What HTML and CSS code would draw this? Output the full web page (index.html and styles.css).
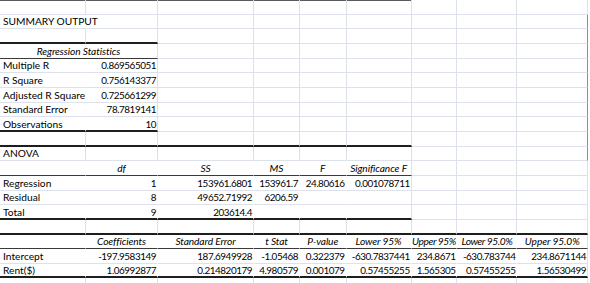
FILE: index.html
```html
<!DOCTYPE html>
<html>
<head>
<meta charset="utf-8">
<link rel="stylesheet" href="styles.css">
</head>
<body>
<div class="sheet">
  <!-- row 0 -->
  <div class="c top"></div><div class="c top"></div><div class="c top"></div><div class="c top"></div><div class="c top"></div><div class="c top"></div><div class="c"></div><div class="c"></div><div class="c"></div>
  <!-- row 1 -->
  <div class="c nr ov">SUMMARY OUTPUT</div><div class="c"></div><div class="c"></div><div class="c"></div><div class="c"></div><div class="c"></div><div class="c"></div><div class="c"></div><div class="c dk"></div>
  <!-- row 2 -->
  <div class="c th"></div><div class="c th"></div><div class="c"></div><div class="c"></div><div class="c"></div><div class="c"></div><div class="c"></div><div class="c"></div><div class="c dk"></div>
  <!-- row 3 -->
  <div class="c s2 ctr i thin">Regression Statistics</div><div class="c"></div><div class="c"></div><div class="c"></div><div class="c"></div><div class="c"></div><div class="c"></div><div class="c dk"></div>
  <!-- row 4 -->
  <div class="c nr">Multiple R</div><div class="c r">0.869565051</div><div class="c"></div><div class="c"></div><div class="c"></div><div class="c"></div><div class="c"></div><div class="c"></div><div class="c dk"></div>
  <!-- row 5 -->
  <div class="c nr">R Square</div><div class="c r">0.756143377</div><div class="c"></div><div class="c"></div><div class="c"></div><div class="c"></div><div class="c"></div><div class="c"></div><div class="c dk"></div>
  <!-- row 6 -->
  <div class="c nr">Adjusted R Square</div><div class="c r">0.725661299</div><div class="c"></div><div class="c"></div><div class="c"></div><div class="c"></div><div class="c"></div><div class="c"></div><div class="c dk"></div>
  <!-- row 7 -->
  <div class="c nr">Standard Error</div><div class="c r">78.7819141</div><div class="c"></div><div class="c"></div><div class="c"></div><div class="c"></div><div class="c"></div><div class="c"></div><div class="c dk"></div>
  <!-- row 8 -->
  <div class="c nr th">Observations</div><div class="c r th">10</div><div class="c"></div><div class="c"></div><div class="c"></div><div class="c"></div><div class="c"></div><div class="c"></div><div class="c dk"></div>
  <!-- row 9 -->
  <div class="c th"></div><div class="c th"></div><div class="c th"></div><div class="c th"></div><div class="c th"></div><div class="c th"></div><div class="c"></div><div class="c"></div><div class="c dk"></div>
  <!-- row 10 -->
  <div class="c">ANOVA</div><div class="c"></div><div class="c"></div><div class="c"></div><div class="c"></div><div class="c"></div><div class="c"></div><div class="c"></div><div class="c dk"></div>
  <!-- row 11 -->
  <div class="c nr thin"></div><div class="c nr thin ctr i">df</div><div class="c nr thin ctr i">SS</div><div class="c nr thin ctr i">MS</div><div class="c nr thin ctr i">F</div><div class="c thin ctr i">Significance F</div><div class="c"></div><div class="c"></div><div class="c"></div>
  <!-- row 12 -->
  <div class="c nr">Regression</div><div class="c nr r">1</div><div class="c nr r">153961.6801</div><div class="c nr r">153961.7</div><div class="c nr r">24.80616</div><div class="c r">0.001078711</div><div class="c"></div><div class="c"></div><div class="c"></div>
  <!-- row 13 -->
  <div class="c nr">Residual</div><div class="c nr r">8</div><div class="c nr r">49652.71992</div><div class="c nr r">6206.59</div><div class="c nr r"></div><div class="c r"></div><div class="c"></div><div class="c"></div><div class="c"></div>
  <!-- row 14 -->
  <div class="c nr th">Total</div><div class="c nr r th">9</div><div class="c nr r th">203614.4</div><div class="c nr r th"></div><div class="c nr r th"></div><div class="c r th"></div><div class="c"></div><div class="c"></div><div class="c"></div>
  <!-- row 15 -->
  <div class="c th"></div><div class="c th"></div><div class="c th"></div><div class="c th"></div><div class="c th"></div><div class="c th"></div><div class="c th"></div><div class="c th"></div><div class="c th"></div>
  <!-- row 16 -->
  <div class="c nr thin"></div><div class="c nr thin ctr i">Coefficients</div><div class="c nr thin ctr i">Standard Error</div><div class="c nr thin ctr i">t Stat</div><div class="c nr thin ctr i">P-value</div><div class="c nr thin ctr i">Lower 95%</div><div class="c nr thin ctr i tight">Upper 95%</div><div class="c nr thin ctr i tight">Lower 95.0%</div><div class="c thin ctr i">Upper 95.0%</div>
  <!-- row 17 -->
  <div class="c nr">Intercept</div><div class="c nr r">-197.9583149</div><div class="c nr r">187.6949928</div><div class="c nr r">-1.05468</div><div class="c nr r">0.322379</div><div class="c nr r">-630.7837441</div><div class="c nr r">234.8671</div><div class="c nr r">-630.783744</div><div class="c r">234.8671144</div>
  <!-- row 18 -->
  <div class="c nr th">Rent($)</div><div class="c nr r th">1.06992877</div><div class="c nr r th">0.214820179</div><div class="c nr r th">4.980579</div><div class="c nr r th">0.001079</div><div class="c nr r th">0.57455255</div><div class="c nr r th">1.565305</div><div class="c nr r th">0.57455255</div><div class="c r th">1.56530499</div>
  <!-- row 19 -->
  <div class="c"></div><div class="c"></div><div class="c"></div><div class="c"></div><div class="c"></div><div class="c"></div><div class="c"></div><div class="c"></div><div class="c"></div>
</div>
</body>
</html>
```

FILE: styles.css
```css
html, body {
  margin: 0;
  padding: 0;
  background: #ffffff;
  overflow: hidden;
}

.sheet {
  display: grid;
  grid-template-columns: 86px 72px 96px 46px 46.5px 65.2px 45.8px 60px 70.5px;
  grid-auto-rows: 14.667px;
  width: 588px;
  height: 283px;
  overflow: hidden;
  font-family: "Lato", "Open Sans", sans-serif;
  font-size: 10.2px;
  letter-spacing: 0;
  color: #000000;
}

.c {
  box-sizing: border-box;
  border-right: 1px solid #dde1ec;
  border-bottom: 1px solid #dde1ec;
  display: flex;
  align-items: flex-end;
  justify-content: flex-start;
  padding: 0 2px 1px 3px;
  line-height: 11px;
  white-space: nowrap;
  overflow: hidden;
}

.nr { border-right-color: transparent; }
.ov { overflow: visible; position: relative; z-index: 1; }
.r { justify-content: flex-end; padding-right: 1px; font-size: 9.9px; letter-spacing: -0.45px; }
.ctr { justify-content: center; padding-left: 0; padding-right: 0; }
.i { font-style: italic; letter-spacing: -0.1px; }
.tight { letter-spacing: -0.4px; }
.s2 { grid-column: span 2; }

.thin { border-bottom: 1px solid #3a3a3a; }
.th { border-bottom: 2px solid #1e1e1e; padding-bottom: 0; }

.top { box-shadow: inset 0 1px 0 #5a5a5a; }
.dk { border-right-color: #8e8e8e; }
```
